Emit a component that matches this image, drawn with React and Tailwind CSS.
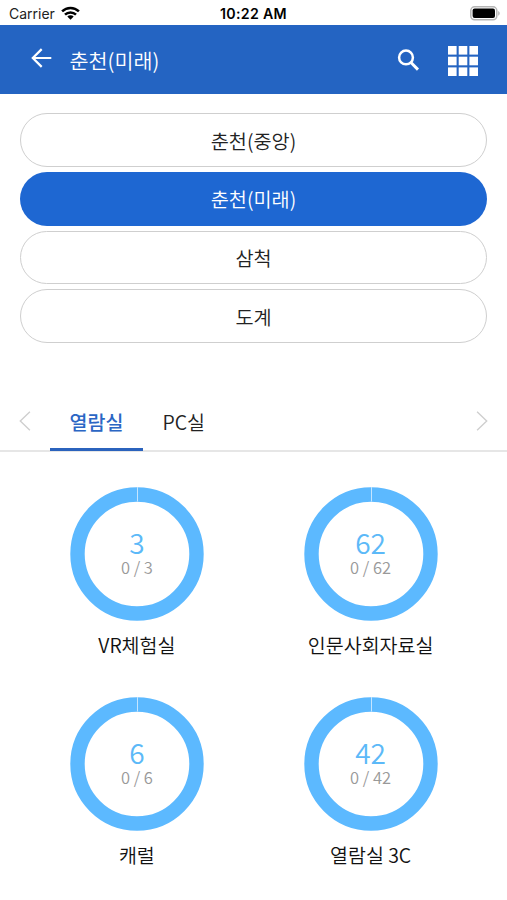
const branches = ["춘천(중앙)", "춘천(미래)", "삼척", "도계"];

const rooms = [
  { name: "VR체험실", used: 0, total: 3 },
  { name: "인문사회자료실", used: 0, total: 62 },
  { name: "캐럴", used: 0, total: 6 },
  { name: "열람실 3C", used: 0, total: 42 },
];

function StatusBar() {
  return (
    <div className="grid h-[25px] grid-cols-3 items-center bg-white pl-[9px] pr-[6px] pt-[2px] font-['Inter',sans-serif] leading-none text-[#222]">
      <div className="flex items-center gap-[6px]">
        <span className="text-[14px]">Carrier</span>
        <svg width="19" height="14" viewBox="0 0 19 14" className="-mt-[2px]" fill="none" stroke="#000" strokeWidth="2.5">
          <path d="M1.1 5.4a12 12 0 0 1 16.8 0" />
          <path d="M4 8.7a7.8 7.8 0 0 1 11 0" />
          <path d="M9.5 13.8 6.3 10.6a4.6 4.6 0 0 1 6.4 0z" fill="#000" stroke="none" />
        </svg>
      </div>
      <span className="-ml-[3px] whitespace-nowrap pt-[2px] text-center text-[14.2px] font-semibold tracking-[0.3px] text-black">10:22 AM</span>
      <svg width="31" height="15" viewBox="0 0 31 15" className="-mt-[1px] justify-self-end">
        <rect x="0.8" y="0.8" width="26" height="13" rx="3.8" fill="#fff" stroke="#b5b5b5" strokeWidth="1.5" />
        <rect x="2.6" y="2.5" width="22.4" height="9.6" rx="2" fill="#000" />
        <path d="M28.2 5v4.8c2-.9 2-3.9 0-4.8z" fill="#b5b5b5" />
      </svg>
    </div>
  );
}

function Header() {
  return (
    <header className="flex h-[68.5px] items-center bg-[#2464c2] pl-[31px] pr-[29px] text-white">
      <button className="-mt-[3px]" aria-label="뒤로">
        <svg width="21" height="20" viewBox="0 0 21 20" fill="none" stroke="#fff" strokeWidth="2.2">
          <path d="M20.3 10H2M10.7 1.1 1.8 10l8.9 8.9" />
        </svg>
      </button>
      <h1 className="ml-[17.5px] mt-[1px] flex-1 text-[20.7px] font-[350] leading-[28px]">춘천(미래)</h1>
      <button className="mr-[29px] mt-[2px]" aria-label="검색">
        <svg width="22" height="22" viewBox="0 0 22 22" fill="none" stroke="#fff">
          <circle cx="9" cy="8.4" r="6.9" strokeWidth="2.5" />
          <path d="m14.2 13.8 6.8 6.8" strokeWidth="3" />
        </svg>
      </button>
      <button className="mt-[3px]" aria-label="메뉴">
        <svg width="30" height="30" viewBox="0 0 30 30" fill="#fff">
          {[0, 10.7, 21.4].map((y) =>
            [0, 10.7, 21.4].map((x) => <rect key={`${x}-${y}`} x={x} y={y} width="8.6" height="8.6" />)
          )}
        </svg>
      </button>
    </header>
  );
}

function Arrow({ flip }) {
  return (
    <svg width="12" height="20" viewBox="0 0 12 20" className={flip ? "rotate-180" : ""} fill="none" stroke="#cfcfcf" strokeWidth="1.4">
      <path d="M10.9.8 1.3 10l9.6 9.2" />
    </svg>
  );
}

function Tabs() {
  return (
    <nav className="mt-[51px] flex h-[58px] border-b-2 border-[#e6e6e6] pl-[19px] pr-[19px]">
      <div className="mt-[17px]">
        <Arrow />
      </div>
      <div className="ml-[19px] flex flex-1 text-[19.5px] leading-[28px]">
        <button className="h-[57px] w-[93px] border-b-[3px] border-[#2b63bd] pt-[2px] font-medium text-[#2b66c4]">
          열람실
        </button>
        <button className="h-[55px] px-[19.5px] pt-[2px] font-[350] text-[#222]">PC실</button>
      </div>
      <div className="mt-[17px]">
        <Arrow flip />
      </div>
    </nav>
  );
}

function SeatRing({ room }) {
  return (
    <div className="flex h-[210px] flex-col items-center">
      <div className="grid h-[134px] w-[134px] place-items-center">
        <svg width="134" height="134" viewBox="0 0 134 134" className="col-start-1 row-start-1">
          <circle cx="67" cy="67" r="59.5" fill="none" stroke="#5cb9ff" strokeWidth="14.4" />
          <path d="M67.5 0v14.5" stroke="#c5e5ff" strokeWidth="1" />
        </svg>
        <div className="col-start-1 row-start-1 flex flex-col items-center pr-[1px] pt-[1px]">
          <span className="text-[28px] font-[350] leading-[27px] text-[#5cb9f8]">{room.total - room.used}</span>
          <span className="text-[16.5px] font-[350] leading-[23px] text-[#999]">
            {room.used} / {room.total}
          </span>
        </div>
      </div>
      <p className="mr-[1px] mt-[10px] text-[19.5px] font-[350] leading-[28px] text-[#111]">{room.name}</p>
    </div>
  );
}

function App() {
  return (
    <div className="h-[900px] w-full overflow-hidden bg-white font-['Noto_Sans_CJK_KR',sans-serif]">
      <StatusBar />
      <Header />
      <main>
        <ul className="flex flex-col gap-[5px] px-[20px] pt-[19.7px]">
          {branches.map((name) => (
            <li
              key={name}
              className={`flex h-[53.7px] items-center justify-center rounded-full pt-[1px] text-[19.7px] font-[350] leading-[28px] ${
                name === "춘천(미래)" ? "bg-[#1e67d2] text-white" : "border-[1.5px] border-[#cfcfcf] text-[#222]"
              }`}
            >
              {name}
            </li>
          ))}
        </ul>
        <Tabs />
        <section className="grid grid-cols-2 pl-[20.5px] pr-[19px] pt-[35px]">
          {rooms.map((room) => (
            <SeatRing key={room.name} room={room} />
          ))}
        </section>
      </main>
    </div>
  );
}

export default App;
